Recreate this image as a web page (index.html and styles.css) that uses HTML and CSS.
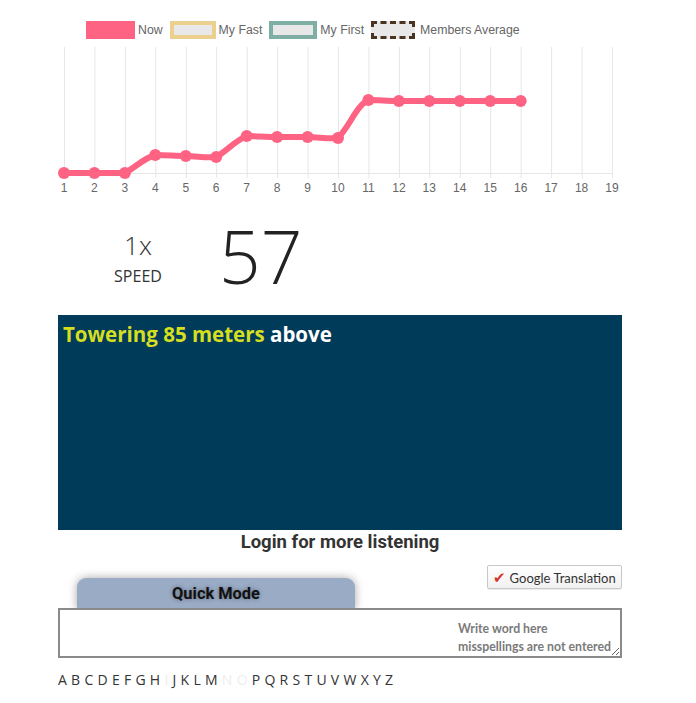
FILE: index.html
```html
<!DOCTYPE html>
<html lang="en">
<head>
    <meta charset="UTF-8">
    <meta name="viewport" content="width=device-width, initial-scale=1.0">
    <title>Listening</title>
    <link rel="stylesheet" href="styles.css">
</head>
<body>
    <div class="legend">
        <span class="legend-box box-now"></span><span class="legend-label">Now</span>
        <span class="legend-box box-fast"></span><span class="legend-label">My Fast</span>
        <span class="legend-box box-first"></span><span class="legend-label">My First</span>
        <span class="legend-box box-avg"></span><span class="legend-label">Members Average</span>
    </div>

    <div class="page">
        <svg class="chart" width="564" height="160" viewBox="0 0 564 160">
            <g stroke="#e6e6e6" stroke-width="1">
                <line x1="6.5" y1="7" x2="6.5" y2="138"/>
                <line x1="36.9" y1="7" x2="36.9" y2="138"/>
                <line x1="67.4" y1="7" x2="67.4" y2="138"/>
                <line x1="97.8" y1="7" x2="97.8" y2="138"/>
                <line x1="128.3" y1="7" x2="128.3" y2="138"/>
                <line x1="158.7" y1="7" x2="158.7" y2="138"/>
                <line x1="189.2" y1="7" x2="189.2" y2="138"/>
                <line x1="219.6" y1="7" x2="219.6" y2="138"/>
                <line x1="250.1" y1="7" x2="250.1" y2="138"/>
                <line x1="280.5" y1="7" x2="280.5" y2="138"/>
                <line x1="310.9" y1="7" x2="310.9" y2="138"/>
                <line x1="341.4" y1="7" x2="341.4" y2="138"/>
                <line x1="371.8" y1="7" x2="371.8" y2="138"/>
                <line x1="402.3" y1="7" x2="402.3" y2="138"/>
                <line x1="432.7" y1="7" x2="432.7" y2="138"/>
                <line x1="463.2" y1="7" x2="463.2" y2="138"/>
                <line x1="493.6" y1="7" x2="493.6" y2="138"/>
                <line x1="524.1" y1="7" x2="524.1" y2="138"/>
                <line x1="554.5" y1="7" x2="554.5" y2="138"/>
                <line x1="6" y1="133.5" x2="555" y2="133.5"/>
            </g>
            <g class="ticks" text-anchor="middle">
                <text x="6" y="152">1</text>
                <text x="36.4" y="152">2</text>
                <text x="66.9" y="152">3</text>
                <text x="97.3" y="152">4</text>
                <text x="127.8" y="152">5</text>
                <text x="158.2" y="152">6</text>
                <text x="188.7" y="152">7</text>
                <text x="219.1" y="152">8</text>
                <text x="249.6" y="152">9</text>
                <text x="280" y="152">10</text>
                <text x="310.4" y="152">11</text>
                <text x="340.9" y="152">12</text>
                <text x="371.3" y="152">13</text>
                <text x="401.8" y="152">14</text>
                <text x="432.2" y="152">15</text>
                <text x="462.7" y="152">16</text>
                <text x="493.1" y="152">17</text>
                <text x="523.6" y="152">18</text>
                <text x="554" y="152">19</text>
            </g>
            <path d="M6 133 L36.4 133 L66.9 133 C78 127 86 118 97.3 115 C108 115 118 116 127.8 116 C138 116 148 118 158.2 117 C170 110 178 100 188.7 96 C198 96 208 97 219.1 97 L249.6 97 C260 97 270 99 280 98 C292 86 298 66 310.4 60 C320 60 330 61 340.9 61 L462.7 61"
                  fill="none" stroke="#ff6384" stroke-width="6" stroke-linejoin="round" stroke-linecap="round"/>
            <g fill="#ff6384">
                <circle cx="6" cy="133" r="6"/>
                <circle cx="36.4" cy="133" r="6"/>
                <circle cx="66.9" cy="133" r="6"/>
                <circle cx="97.3" cy="115" r="6"/>
                <circle cx="127.8" cy="116" r="6"/>
                <circle cx="158.2" cy="117" r="6"/>
                <circle cx="188.7" cy="96" r="6"/>
                <circle cx="219.1" cy="97" r="6"/>
                <circle cx="249.6" cy="97" r="6"/>
                <circle cx="280" cy="98" r="6"/>
                <circle cx="310.4" cy="60" r="6"/>
                <circle cx="340.9" cy="61" r="6"/>
                <circle cx="371.3" cy="61" r="6"/>
                <circle cx="401.8" cy="61" r="6"/>
                <circle cx="432.2" cy="61" r="6"/>
                <circle cx="462.7" cy="61" r="6"/>
            </g>
        </svg>

        <div class="speed-row">
            <div class="speed">
                <div class="speed-value">1x</div>
                <div class="speed-label">SPEED</div>
            </div>
            <div class="count">57</div>
        </div>

        <div class="reader">
            <span class="heard">Towering 85 meters</span> <span class="current">above</span>
        </div>

        <div class="login-note">Login for more listening</div>

        <div class="controls">
            <div class="tab">Quick Mode</div>
            <button class="translate-btn"><span class="check">&#10004;</span> Google Translation</button>
        </div>

        <textarea class="answer" placeholder="Write word here&#10;misspellings are not entered"></textarea>

        <div class="alphabet">
            <span>A</span> <span>B</span> <span>C</span> <span>D</span> <span>E</span> <span>F</span> <span>G</span> <span>H</span> <span class="off">I</span> <span>J</span> <span>K</span> <span>L</span> <span>M</span> <span class="off">N</span> <span class="off">O</span> <span>P</span> <span>Q</span> <span>R</span> <span>S</span> <span>T</span> <span>U</span> <span>V</span> <span>W</span> <span>X</span> <span>Y</span> <span>Z</span>
        </div>
    </div>
</body>
</html>
```

FILE: styles.css
```css
body {
    margin: 0;
    font-family: 'Open Sans', sans-serif;
    color: #333;
    background: #fff;
}
.legend {
    display: flex;
    align-items: center;
    height: 18px;
    padding: 21px 0 0 86px;
    font-family: 'Liberation Sans', Arial, sans-serif;
    font-size: 12.3px;
    color: #666;
}
.legend-box {
    width: 49px;
    height: 18px;
    box-sizing: border-box;
    margin-right: 3px;
}
.legend-label {
    margin-right: 7px;
}
.box-now {
    background: #ff6384;
}
.box-fast {
    width: 46px;
    background: #e8e8e8;
    border: 4px solid #ecd18e;
}
.box-first {
    width: 48px;
    background: #e8e8e8;
    border: 4px solid #7eaea4;
}
.box-avg {
    width: 44px;
    margin-right: 5px;
    background: #e8e8e8;
    border: 3px dashed #4a3321;
}
.page {
    width: 564px;
    margin-left: 58px;
}
.chart {
    display: block;
    margin-top: 1px;
}
.ticks {
    font-family: 'Liberation Sans', Arial, sans-serif;
    font-size: 12px;
    fill: #666;
}
.speed-row {
    display: flex;
    align-items: flex-start;
    height: 115px;
}
.speed {
    width: 160px;
    text-align: center;
    padding-top: 29px;
}
.speed-value {
    font-size: 26px;
    font-weight: 300;
    line-height: 32px;
}
.speed-label {
    font-size: 16px;
    line-height: 24px;
    margin-top: 3px;
}
.count {
    margin-left: 1px;
    font-size: 73px;
    font-weight: 300;
    line-height: 90px;
    color: #222;
    margin-top: 11px;
}
.reader {
    height: 215px;
    box-sizing: border-box;
    padding: 6px 5px;
    background: #003b5a;
    font-size: 20.5px;
    font-weight: bold;
    line-height: 27px;
    color: #fff;
}
.heard {
    color: #d6df1f;
}
.login-note {
    font-family: Roboto, sans-serif;
    font-weight: bold;
    font-size: 18.5px;
    line-height: 24px;
    text-align: center;
    color: #333;
}
.controls {
    display: flex;
    justify-content: space-between;
    align-items: flex-start;
    height: 43px;
    margin-top: 11px;
}
.tab {
    width: 278px;
    height: 32px;
    margin: 13px 0 0 19px;
    box-sizing: border-box;
    padding-top: 6px;
    background: #9aabc6;
    border-radius: 9px 9px 0 0;
    box-shadow: 0 0 10px rgba(0, 0, 0, 0.35);
    font-family: Roboto, sans-serif;
    font-weight: bold;
    font-size: 16.4px;
    text-align: center;
    color: #111;
    text-shadow: 0 0 4px rgba(0, 0, 0, 0.4);
}
.translate-btn {
    height: 24px;
    width: 135px;
    padding: 0;
    border: 1px solid #c8c8c8;
    border-radius: 2px;
    background: linear-gradient(#fff, #f1f1f1);
    box-shadow: 0 1px 1px rgba(0, 0, 0, 0.08);
    font-family: Lato, sans-serif;
    font-size: 13px;
    color: #333;
}
.check {
    color: #d9322a;
    font-size: 15px;
}
.answer {
    position: relative;
    display: block;
    width: 564px;
    height: 50px;
    margin: 0;
    box-sizing: border-box;
    padding: 10px 4px 0 398px;
    border: 2px solid #8a8a8a;
    background: #fff;
    font-family: Lato, sans-serif;
    font-size: 12.3px;
    font-weight: bold;
    line-height: 18px;
    white-space: pre;
    overflow: hidden;
}
.answer::placeholder {
    color: #7a7a7a;
}
.alphabet {
    margin-top: 12px;
    font-size: 14px;
    line-height: 20px;
    letter-spacing: 0.2px;
    word-spacing: 0.2px;
    color: #333;
}
.alphabet .off {
    color: #eee;
}
```
